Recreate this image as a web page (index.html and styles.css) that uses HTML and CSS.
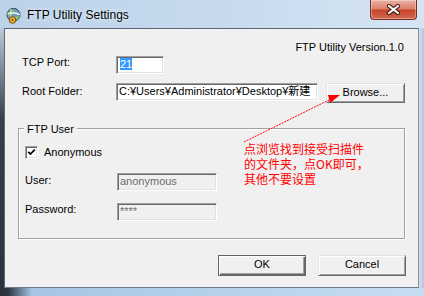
FILE: index.html
```html
<!DOCTYPE html>
<html>
<head>
<meta charset="utf-8">
<title>FTP Utility Settings</title>
<link rel="stylesheet" href="styles.css">
</head>
<body>
<div class="window">
  <div class="titlebar">
    <svg class="app-icon" viewBox="0 0 16 16" width="16" height="16">
      <circle cx="8.5" cy="6.8" r="6.5" fill="#6f9ec8" stroke="#3d4b58"/>
      <path d="M3 5 Q5 1.5 9 2.2 Q10.5 4 8 6 Q6 8.5 3.4 8.2Z" fill="#7cbd5a"/>
      <path d="M10 8.5 Q13 7.5 14.6 8.8 Q13 12.5 10.5 12Z" fill="#86c266"/>
      <path d="M2.5 6 Q9 3.5 15 6.8" stroke="#ffffff" fill="none" stroke-width="1.3"/>
      <path d="M6 1 Q4 7 8 13" stroke="#e8eef5" fill="none" stroke-width="0.8"/>
      <circle cx="7.5" cy="12" r="3.3" fill="#f0b428" stroke="#7a4e0c" stroke-width="1"/>
      <circle cx="7.5" cy="12" r="1.1" fill="#7a4e0c"/>
    </svg>
    <span class="title">FTP Utility Settings</span>
    <div class="close">
      <svg viewBox="0 0 15 11" width="15" height="11">
        <path d="M3 2 L12 9 M12 2 L3 9" stroke="#4a1c14" stroke-width="4.2" stroke-linecap="round"/>
        <path d="M3 2 L12 9 M12 2 L3 9" stroke="#ffffff" stroke-width="2.2" stroke-linecap="round"/>
      </svg>
    </div>
  </div>
  <div class="middle">
    <div class="frame-left"></div>
    <div class="client">
      <div class="version">FTP Utility Version.1.0</div>
      <div class="row row-port">
        <span class="lbl">TCP Port:</span>
        <div class="edit port"><span class="sel">21</span></div>
      </div>
      <div class="row row-root">
        <span class="lbl lbl-root">Root Folder:</span>
        <div class="edit root">C:¥Users¥Administrator¥Desktop¥新建</div>
        <div class="btn browse">Browse...</div>
      </div>
      <div class="group">
        <span class="legend">FTP User</span>
        <div class="check-row">
          <span class="checkbox">
            <svg viewBox="0 0 9 9" width="9" height="9"><path d="M1.2 3.8 L3.4 6 L7.8 1.6" stroke="#000" stroke-width="1.7" fill="none"/></svg>
          </span>
          <span>Anonymous</span>
        </div>
        <div class="row row-user">
          <span class="lbl2 lbl-user">User:</span>
          <div class="edit disabled">anonymous</div>
        </div>
        <div class="row row-pass">
          <span class="lbl2">Password:</span>
          <div class="edit disabled">****</div>
        </div>
      </div>
      <div class="buttons">
        <div class="btn default">OK</div>
        <div class="btn">Cancel</div>
      </div>
    </div>
    <div class="frame-right"></div>
  </div>
  <div class="frame-bottom"></div>
  <svg class="arrow" viewBox="0 0 424 296" width="424" height="296">
    <line x1="244" y1="142" x2="331" y2="99" stroke="#ff0000" stroke-width="1" stroke-dasharray="2 1"/>
    <polygon points="328,95 340,95 330,103" fill="#ff0000"/>
  </svg>
  <div class="note">
    <div class="note-line">点浏览找到接受扫描件</div>
    <div class="note-line">的文件夹，点OK即可，</div>
    <div class="note-line">其他不要设置</div>
  </div>
</div>
</body>
</html>
```

FILE: styles.css
```css
html, body {
  margin: 0;
  padding: 0;
  background: #2a3440;
}

.window {
  position: relative;
  width: 424px;
  height: 296px;
  display: flex;
  flex-direction: column;
  overflow: hidden;
  font-family: "Liberation Sans", "Noto Sans CJK JP", sans-serif;
  background: #c6d9ed;
}

.titlebar {
  height: 28px;
  flex: none;
  display: flex;
  align-items: flex-start;
  background: linear-gradient(90deg, #bcd2e9 0%, #c8dbee 55%, #d6e5f4 100%);
}

.app-icon {
  flex: none;
  margin: 8px 0 0 5px;
}

.title {
  margin: 8px 0 0 6px;
  font-size: 12px;
  line-height: 14px;
  color: #000;
  text-shadow: 0 0 5px rgba(255, 255, 255, 0.9);
}

.close {
  margin-left: auto;
  margin-right: 7px;
  width: 47px;
  height: 20px;
  box-sizing: border-box;
  border: 1px solid #7a2d22;
  border-top: none;
  border-radius: 0 0 4px 4px;
  background: linear-gradient(#e9b2a4 0%, #dc826b 45%, #c8432b 55%, #cf6a4f 100%);
  box-shadow: inset 0 0 0 1px rgba(255, 255, 255, 0.35);
  display: flex;
  align-items: center;
  justify-content: center;
}

.middle {
  display: flex;
  height: 260px;
  flex: none;
}

.frame-left {
  width: 4px;
  flex: none;
  background: linear-gradient(#bccad8 0, #8795a4 35px, #34404d 90px, #2a3440 100%);
}

.frame-right {
  width: 5px;
  flex: none;
  background: linear-gradient(90deg, #d3e1ee, #b3c5d8);
}

.frame-bottom {
  height: 8px;
  flex: none;
  background: linear-gradient(90deg, #262f3a 0, #2c3743 8px, #a6c5e5 32px, #b9d3ec 60%, #c8ddf1 100%);
}

.client {
  width: 415px;
  flex: none;
  box-sizing: border-box;
  border: 1px solid #5d6b79;
  border-right-color: #7f8e9d;
  border-bottom-color: #6f7d8b;
  background: #f0f0f0;
  padding: 12px 12px 0 13px;
  display: flex;
  flex-direction: column;
  font-size: 11px;
  color: #000;
}

.version {
  align-self: flex-end;
  margin-right: 2px;
  line-height: 13px;
}

.row {
  display: flex;
  align-items: flex-start;
}

.row-port {
  margin-top: 2px;
  padding-left: 4px;
}

.row-root {
  margin-top: 9px;
  padding-left: 4px;
}

.lbl {
  width: 94px;
  flex: none;
  line-height: 13px;
}

.lbl-root {
  padding-top: 2px;
}

.edit {
  box-sizing: border-box;
  height: 18px;
  flex: none;
  border: 1px solid;
  border-color: #a0a0a0 #ffffff #ffffff #a0a0a0;
  box-shadow: inset 1px 1px 0 #696969, inset -1px -1px 0 #e3e3e3;
  background: #fff;
  padding: 1px 1px 0 2px;
  line-height: 13px;
  white-space: nowrap;
  overflow: hidden;
}

.port {
  width: 48px;
  padding-left: 3px;
}

.sel {
  background: #3399ff;
  color: #fff;
}

.root {
  width: 202px;
}

.btn {
  box-sizing: border-box;
  flex: none;
  display: flex;
  align-items: center;
  justify-content: center;
  border: 1px solid;
  border-color: #e3e3e3 #696969 #696969 #e3e3e3;
  box-shadow: inset 1px 1px 0 #ffffff, inset -1px -1px 0 #a0a0a0;
  background: #f0f0f0;
  line-height: 13px;
  padding-bottom: 2px;
}

.browse {
  width: 79px;
  height: 20px;
  margin-left: 8px;
}

.group {
  margin-top: 25px;
  width: 387px;
  box-sizing: border-box;
  border: 1px solid #a0a0a0;
  box-shadow: inset 1px 1px 0 #ffffff, 1px 1px 0 #ffffff;
  padding: 0 0 17px 6px;
  display: flex;
  flex-direction: column;
  align-items: flex-start;
}

.legend {
  margin: -6px 0 0 -1px;
  padding: 0 3px;
  background: #f0f0f0;
  line-height: 13px;
}

.check-row {
  margin-top: 10px;
  display: flex;
  align-items: flex-start;
  gap: 6px;
  line-height: 13px;
}

.checkbox {
  width: 13px;
  height: 13px;
  box-sizing: border-box;
  border: 1px solid;
  border-color: #a0a0a0 #ffffff #ffffff #a0a0a0;
  box-shadow: inset 1px 1px 0 #696969, inset -1px -1px 0 #e3e3e3;
  background: #fff;
  padding: 1px;
  display: flex;
}

.row-user {
  margin-top: 14px;
}

.row-pass {
  margin-top: 12px;
}

.lbl2 {
  width: 92px;
  flex: none;
  line-height: 13px;
}

.lbl-user {
  padding-top: 1px;
}

.disabled {
  width: 100px;
  background: #f0f0f0;
  color: #6d6d6d;
}

.buttons {
  margin-top: 16px;
  display: flex;
  justify-content: flex-end;
  gap: 12px;
}

.buttons .btn {
  width: 88px;
  height: 21px;
}

.default {
  border-color: #646464;
  box-shadow: inset 1px 1px 0 #ffffff, inset -1px -1px 0 #696969, inset -2px -2px 0 #a0a0a0;
}

.arrow {
  position: absolute;
  left: 0;
  top: 0;
  pointer-events: none;
}

.note {
  position: absolute;
  left: 244px;
  top: 141px;
  font-family: "Noto Sans CJK SC", sans-serif;
  font-size: 12px;
  color: #ff0000;
  white-space: nowrap;
}

.note-line {
  height: 15px;
  line-height: 15px;
}
```
